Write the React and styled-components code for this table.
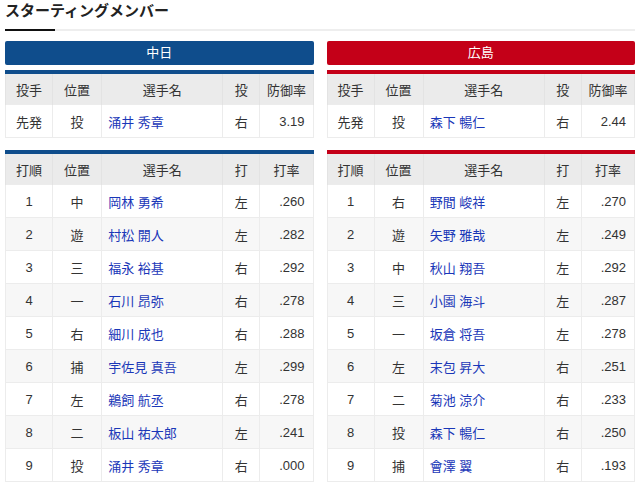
import styled, { createGlobalStyle } from 'styled-components';

const GlobalStyle = createGlobalStyle`
  body {
    margin: 0;
    background: #fff;
    font-family: "Liberation Sans", "Noto Sans CJK JP", sans-serif;
    color: #333;
  }
`;

const Page = styled.div`
  padding: 0 5px;
`;

const Title = styled.h2`
  position: relative;
  margin: 0;
  height: 29px;
  line-height: 22px;
  font-size: 15px;
  font-weight: bold;
  color: #222;
  border-bottom: 2px solid #eee;

  &::after {
    content: '';
    position: absolute;
    left: 0;
    bottom: -2px;
    width: 50px;
    height: 2px;
    background: #111;
  }
`;

const Columns = styled.div`
  display: grid;
  grid-template-columns: 1fr 1fr;
  column-gap: 13px;
  margin-top: 10px;
`;

const TeamColumn = styled.div`
  display: flex;
  flex-direction: column;
`;

const TeamName = styled.div`
  height: 24px;
  line-height: 24px;
  border-radius: 2px;
  background: ${(p) => p.$color};
  color: #fff;
  text-align: center;
  font-size: 13px;
  margin-bottom: 5px;
`;

const Table = styled.table`
  width: 100%;
  table-layout: fixed;
  border-collapse: collapse;
  border: 1px solid #ddd;
  border-top: 4px solid ${(p) => p.$color};
  margin-bottom: ${(p) => p.$gap || 0}px;
  font-size: 13px;
`;

const Th = styled.th`
  height: 30px;
  padding: 0;
  background: #ebebeb;
  font-weight: normal;
  color: #333;
  text-align: center;
  border-left: 1px solid #e3e3e3;
  border-right: 1px solid #e3e3e3;
`;

const Row = styled.tr`
  background: ${(p) => (p.$odd ? '#f7f7f7' : '#fff')};
`;

const Td = styled.td`
  height: 32px;
  padding: 0 ${(p) => (p.$align === 'right' ? '8px' : p.$align === 'left' ? '6px' : '0')};
  text-align: ${(p) => p.$align || 'center'};
  border: 1px solid #ececec;
  color: #333;
  white-space: nowrap;
`;

const PlayerLink = styled.a`
  color: #1a37b8;
  text-decoration: none;
`;

const widths = [47, 49, 121, 37, 53];

const teams = [
  {
    name: '中日',
    color: '#0f4d8c',
    pitcher: ['先発', '投', '涌井 秀章', '右', '3.19'],
    lineup: [
      ['1', '中', '岡林 勇希', '左', '.260'],
      ['2', '遊', '村松 開人', '左', '.282'],
      ['3', '三', '福永 裕基', '右', '.292'],
      ['4', '一', '石川 昂弥', '右', '.278'],
      ['5', '右', '細川 成也', '右', '.288'],
      ['6', '捕', '宇佐見 真吾', '左', '.299'],
      ['7', '左', '鵜飼 航丞', '右', '.278'],
      ['8', '二', '板山 祐太郎', '左', '.241'],
      ['9', '投', '涌井 秀章', '右', '.000'],
    ],
  },
  {
    name: '広島',
    color: '#c40018',
    pitcher: ['先発', '投', '森下 暢仁', '右', '2.44'],
    lineup: [
      ['1', '右', '野間 峻祥', '左', '.270'],
      ['2', '遊', '矢野 雅哉', '左', '.249'],
      ['3', '中', '秋山 翔吾', '左', '.292'],
      ['4', '三', '小園 海斗', '左', '.287'],
      ['5', '一', '坂倉 将吾', '左', '.278'],
      ['6', '左', '末包 昇大', '右', '.251'],
      ['7', '二', '菊池 涼介', '右', '.233'],
      ['8', '投', '森下 暢仁', '右', '.250'],
      ['9', '捕', '會澤 翼', '右', '.193'],
    ],
  },
];

function StatTable({ color, headers, rows, gap }) {
  return (
    <Table $color={color} $gap={gap}>
      <colgroup>
        {widths.map((w, i) => (
          <col key={i} style={{ width: w }} />
        ))}
      </colgroup>
      <thead>
        <tr>
          {headers.map((h) => (
            <Th key={h}>{h}</Th>
          ))}
        </tr>
      </thead>
      <tbody>
        {rows.map((r, i) => (
          <Row key={i} $odd={i % 2 === 1}>
            <Td>{r[0]}</Td>
            <Td>{r[1]}</Td>
            <Td $align="left">
              <PlayerLink href="#">{r[2]}</PlayerLink>
            </Td>
            <Td>{r[3]}</Td>
            <Td $align="right">{r[4]}</Td>
          </Row>
        ))}
      </tbody>
    </Table>
  );
}

export default function App() {
  return (
    <Page>
      <GlobalStyle />
      <Title>スターティングメンバー</Title>
      <Columns>
        {teams.map((t) => (
          <TeamColumn key={t.name}>
            <TeamName $color={t.color}>{t.name}</TeamName>
            <StatTable
              color={t.color}
              headers={['投手', '位置', '選手名', '投', '防御率']}
              rows={[t.pitcher]}
              gap={12}
            />
            <StatTable
              color={t.color}
              headers={['打順', '位置', '選手名', '打', '打率']}
              rows={t.lineup}
            />
          </TeamColumn>
        ))}
      </Columns>
    </Page>
  );
}
